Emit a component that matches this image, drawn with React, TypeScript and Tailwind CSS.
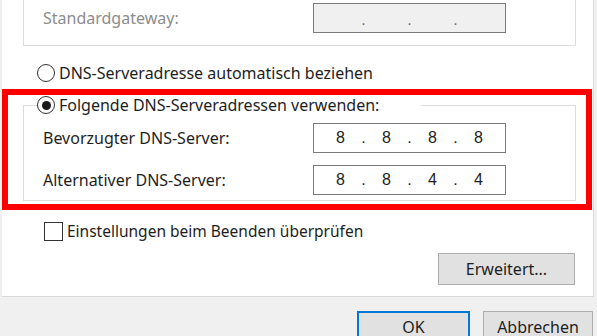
import React from 'react';

const font = { fontFamily: '"Segoe UI", "Noto Sans", sans-serif' };

const IpBox: React.FC<{ parts: string[]; disabled?: boolean }> = ({ parts, disabled }) => (
  <div
    className={`w-[193px] h-[30px] border border-[#7a7a7a] flex items-center justify-center text-[16px] ${
      disabled ? 'bg-[#f0f0f0] text-[#6d6d6d] pt-[3px]' : 'bg-white text-[#1e1e1e]'
    }`}
    style={{ fontFamily: '"Liberation Sans", Arial, sans-serif' }}
  >
    {parts.map((p, i) => (
      <React.Fragment key={i}>
        <span className="w-[20px] text-center">{p}</span>
        {i < parts.length - 1 && <span className="w-[26px] text-center">.</span>}
      </React.Fragment>
    ))}
  </div>
);

const Radio: React.FC<{ checked?: boolean }> = ({ checked }) => (
  <span className="w-[18px] h-[18px] rounded-full border-[1.5px] border-[#333] bg-white flex items-center justify-center shrink-0">
    {checked && <span className="w-[9px] h-[9px] rounded-full bg-[#1a1a1a]" />}
  </span>
);

const App: React.FC = () => {
  return (
    <div className="w-[597px] h-[336px] bg-[#f0f0f0] overflow-hidden relative text-[#1e1e1e] text-[16px]" style={font}>
      {/* white tab page */}
      <div className="ml-[2px] w-[592px] h-[297px] bg-white border-r border-b border-[#d9d9d9] flex flex-col">
        {/* gateway group (top cut off) */}
        <div className="ml-[21px] w-[553px] h-[46px] border-x border-b border-[#dcdcdc] flex items-start">
          <span className="ml-[19px] mt-[6px] text-[#8c8c8c] w-[270px]">Standardgateway:</span>
          <div className="mt-[3px]">
            <IpBox parts={['', '', '', '']} disabled />
          </div>
        </div>

        <div className="mt-[17px] ml-[35px] flex items-center gap-[4px] h-[20px]">
          <Radio />
          <span>DNS-Serveradresse automatisch beziehen</span>
        </div>

        {/* DNS group */}
        <div className="mt-[22px] ml-[21px] w-[553px] h-[96px] border border-[#dcdcdc] flex flex-col">
          <div className="-mt-[11px] ml-[13px] pr-[42px] bg-white w-fit flex items-center gap-[4px] h-[20px]">
            <Radio checked />
            <span>Folgende DNS-Serveradressen verwenden:</span>
          </div>
          <div className="mt-[8px] flex items-center">
            <span className="ml-[19px] w-[270px]">Bevorzugter DNS-Server:</span>
            <IpBox parts={['8', '8', '8', '8']} />
          </div>
          <div className="mt-[12px] flex items-center">
            <span className="ml-[19px] w-[270px]">Alternativer DNS-Server:</span>
            <IpBox parts={['8', '8', '4', '4']} />
          </div>
        </div>

        <div className="mt-[19px] ml-[42px] flex items-center gap-[4px]">
          <span className="w-[19px] h-[19px] border-[1.5px] border-[#333] bg-white shrink-0" />
          <span className="text-[15.5px]">Einstellungen beim Beenden überprüfen</span>
        </div>

        <div className="mt-[10px] ml-[436px]">
          <button className="w-[137px] h-[32px] bg-[#e1e1e1] border border-[#adadad] flex items-center justify-center">
            Erweitert...
          </button>
        </div>
      </div>

      {/* dialog buttons */}
      <div className="mt-[14px] ml-[357px] flex gap-[13px]">
        <button className="w-[113px] h-[32px] bg-[#e1e1e1] border-2 border-[#0078d7] flex items-center justify-center">
          OK
        </button>
        <button className="w-[110px] h-[32px] bg-[#e1e1e1] border border-[#adadad] flex items-center justify-center">
          Abbrechen
        </button>
      </div>

      {/* red highlight annotation */}
      <div className="absolute left-[2px] top-[89px] w-[590px] h-[121px] border-[6px] border-[#ff0000] pointer-events-none" />
    </div>
  );
};

export default App;
